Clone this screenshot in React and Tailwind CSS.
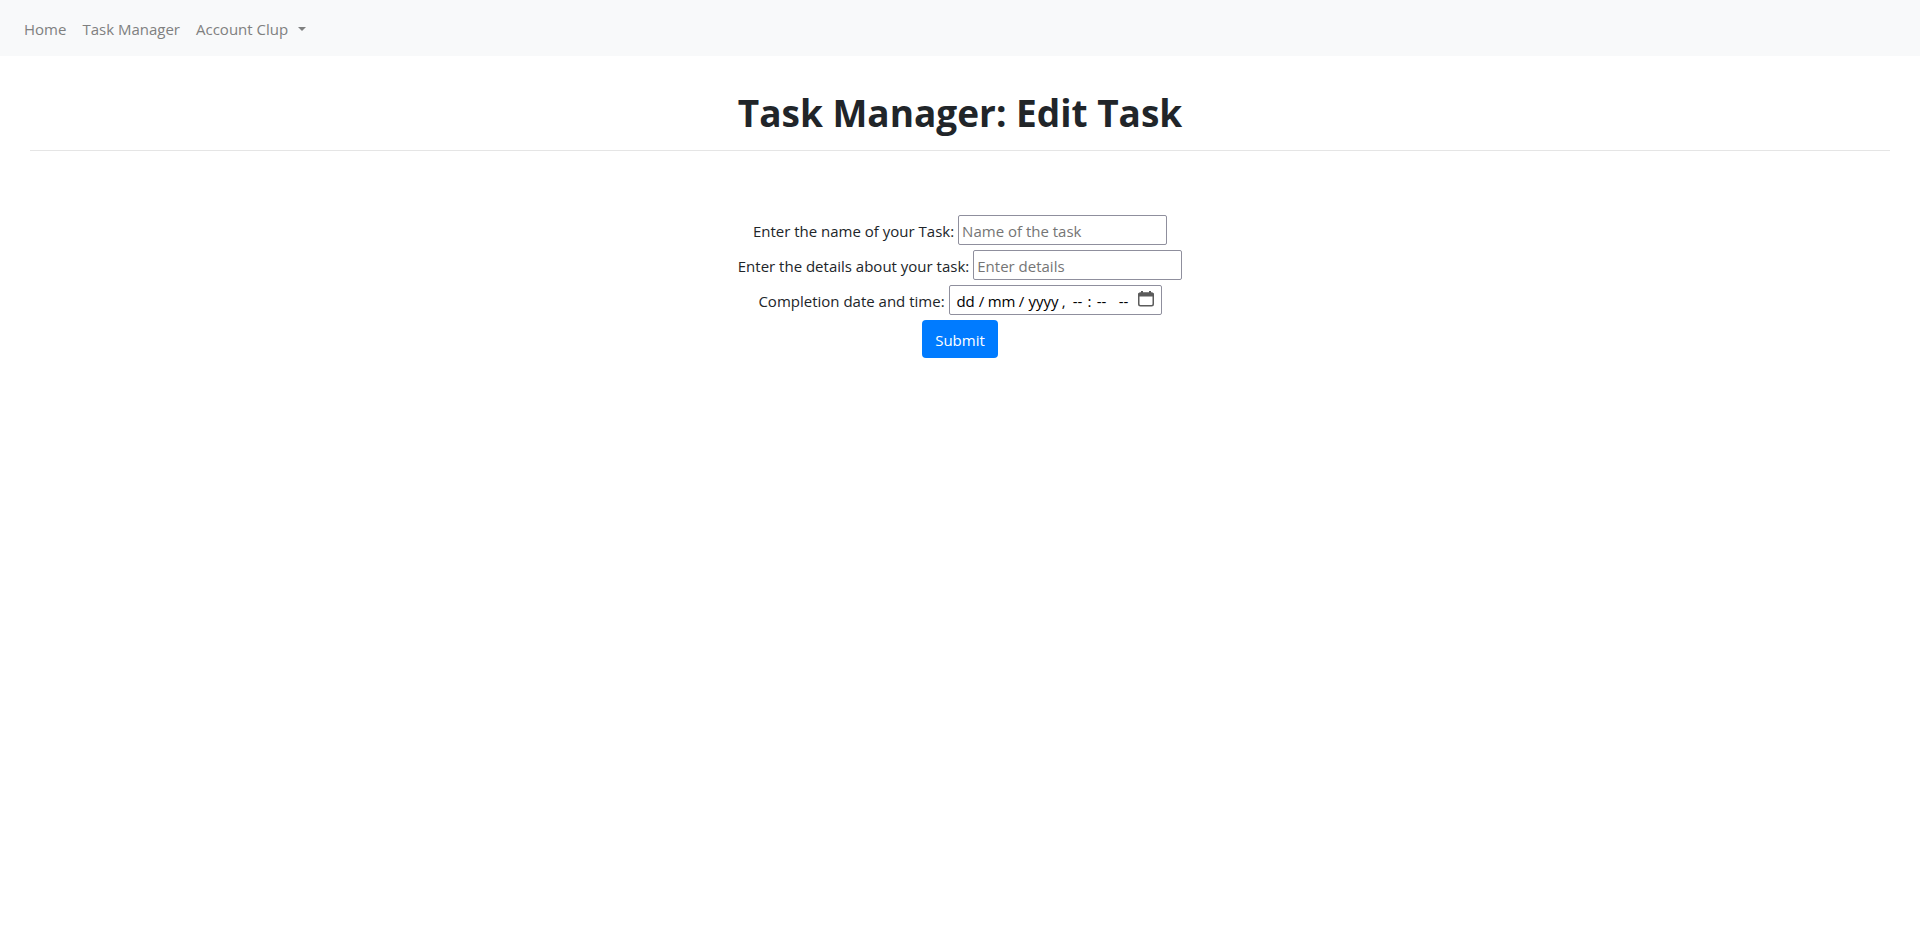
import React from "react";

const segments = [
  { label: "Day", text: "dd", width: "w-5" },
  { sep: "/", width: "w-3" },
  { label: "Month", text: "mm", width: "w-7" },
  { sep: "/", width: "w-3" },
  { label: "Year", text: "yyyy", width: "w-8" },
  { sep: ",", width: "w-2" },
  { label: "Hour", text: "--", width: "w-5" },
  { sep: ":", width: "w-1" },
  { label: "Minute", text: "--", width: "w-5" },
  { label: "AM or PM", text: "--", width: "w-6" },
];

function TextRow({ id, label, placeholder }) {
  return (
    <div className="flex items-center justify-center gap-1">
      <label htmlFor={id} className="pt-[2px]">
        {label}
      </label>
      <input
        id={id}
        type="text"
        placeholder={placeholder}
        className="h-[30px] w-[209px] rounded-[2px] border border-[#8f8f9d] bg-white px-[3px] pt-[2px] placeholder:text-[#757575]"
      />
    </div>
  );
}

function DateTimeField() {
  return (
    <div
      role="group"
      aria-label="Completion date and time"
      className="flex h-[30px] w-[213px] items-center rounded-[2px] border border-[#8f8f9d] bg-white px-[6px] text-black"
    >
      {segments.map((s, i) =>
        s.sep ? (
          <span key={i} className={`${s.width} pt-[2px] text-center`}>
            {s.sep}
          </span>
        ) : (
          <input
            key={i}
            id={i === 0 ? "completion" : undefined}
            type="text"
            aria-label={s.label}
            placeholder={s.text}
            className={`${s.width} pt-[2px] text-center placeholder:text-black`}
          />
        )
      )}
      <button type="button" aria-label="Open calendar" className="ml-auto pb-[2px]">
        <svg width="18" height="18" viewBox="0 0 18 18" fill="none" className="block">
          <rect x="1.75" y="3.25" width="14.5" height="12.5" rx="1.75" stroke="#5b5b5b" strokeWidth="1.5" />
          <path d="M1 6.5v-2a2 2 0 0 1 2-2h1V1h2v1.500h6V1h2v1.500h1a2 2 0 0 1 2 2v2z" fill="#5b5b5b" />
        </svg>
      </button>
    </div>
  );
}

export default function App() {
  return (
    <div className="bg-white font-['Open_Sans','Noto_Sans',sans-serif] text-[15px] leading-6 text-[#212529]">
      <nav className="flex h-14 items-center gap-4 bg-[#f8f9fa] px-6 pt-[2px] text-[#7f8080]">
        <a href="#home">Home</a>
        <a href="#tasks">Task Manager</a>
        <button type="button" className="flex items-center gap-[10px]">
          Account Clup
          <span className="border-x-4 border-t-4 border-x-transparent border-t-current" />
        </button>
      </nav>
      <main className="px-[30px] pt-[33px]">
        <h1 className="text-center text-[37px] leading-12 font-bold">Task Manager: Edit Task</h1>
        <hr className="mt-[13px] border-t border-black/10" />
        <form className="mt-16 flex flex-col gap-[5px]">
          <TextRow id="name" label="Enter the name of your Task:" placeholder="Name of the task" />
          <TextRow id="details" label="Enter the details about your task:" placeholder="Enter details" />
          <div className="flex items-center justify-center gap-1">
            <label htmlFor="completion" className="pt-[2px]">
              Completion date and time:
            </label>
            <DateTimeField />
          </div>
          <button
            type="button"
            className="h-[38px] self-center rounded-[4px] bg-[#007bff] px-[13px] pt-[2px] text-white"
          >
            Submit
          </button>
        </form>
      </main>
    </div>
  );
}
